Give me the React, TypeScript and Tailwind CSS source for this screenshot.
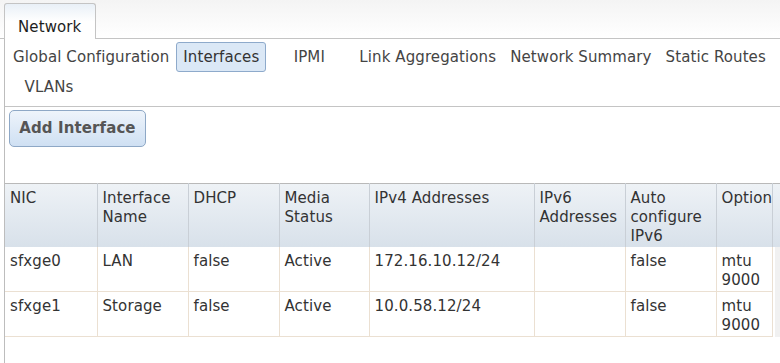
import React from 'react';

const subTabs = [
  { label: 'Global Configuration', active: false },
  { label: 'Interfaces', active: true },
  { label: 'IPMI', active: false },
  { label: 'Link Aggregations', active: false },
  { label: 'Network Summary', active: false },
  { label: 'Static Routes', active: false },
  { label: 'VLANs', active: false },
];

const columns = [
  { title: ['NIC'], width: 92 },
  { title: ['Interface', 'Name'], width: 91 },
  { title: ['DHCP'], width: 91 },
  { title: ['Media', 'Status'], width: 90 },
  { title: ['IPv4 Addresses'], width: 165 },
  { title: ['IPv6', 'Addresses'], width: 91 },
  { title: ['Auto', 'configure', 'IPv6'], width: 91 },
  { title: ['Option'], width: 56 },
];

const rows = [
  ['sfxge0', 'LAN', 'false', 'Active', '172.16.10.12/24', '', 'false', 'mtu 9000'],
  ['sfxge1', 'Storage', 'false', 'Active', '10.0.58.12/24', '', 'false', 'mtu 9000'],
];

const App = () => {
  return (
    <div className="w-[780px] h-[363px] overflow-hidden bg-white font-['DejaVu_Sans',sans-serif] text-[15px] tracking-[0.1px] text-[#3c3c3c]">
      {/* top tab strip */}
      <div className="flex pl-[4px] pt-[3px] bg-gradient-to-b from-[#f4f4f4] to-white border-b border-[#c4c4c4]">
        <div className="w-[92px] h-[36px] -mb-px border border-b-0 border-[#c4c4c4] rounded-t-[3px] bg-gradient-to-b from-[#e9f0f7] via-white to-white flex items-start pt-[12px] pl-[13px] text-[#1e1e1e]">
          Network
        </div>
      </div>

      <div className="ml-[4px] border-l border-[#bdbdbd] h-full">
        {/* sub navigation */}
        <div className="flex flex-wrap pl-[1px] pt-[3px] pb-[4px] border-b border-[#c4c4c4]">
          {subTabs.map(tab => (
            <div
              key={tab.label}
              className={`h-[30px] min-w-[86px] px-[6px] flex items-center justify-center whitespace-nowrap rounded-[3px] border ${
                tab.active
                  ? 'bg-[#dbe8f6] border-[#8eaacb] text-[#333]'
                  : 'border-transparent text-[#444]'
              }`}
            >
              {tab.label}
            </div>
          ))}
        </div>

        {/* toolbar */}
        <div className="pt-[3px] pl-[4px] h-[76px]">
          <button className="w-[137px] h-[37px] rounded-[5px] border border-[#8ea8c6] bg-gradient-to-b from-[#eef4fb] to-[#cfe0f3] font-bold text-[#555] text-[15px]">
            Add Interface
          </button>
        </div>

        {/* table */}
        <div className="flex">
          <table className="table-fixed border-collapse border-t border-[#b9b9b9] w-[767px]">
            <colgroup>
              {columns.map((c, i) => (
                <col key={i} style={{ width: c.width }} />
              ))}
            </colgroup>
            <thead>
              <tr className="h-[63px] bg-gradient-to-b from-[#eef2f6] to-[#d8e1ea]">
                {columns.map((c, i) => (
                  <th
                    key={i}
                    className="align-top text-left font-normal leading-[19px] pl-[5px] pt-[5px] border-r border-[#c9cfd6] text-[#333] whitespace-nowrap overflow-hidden"
                  >
                    {c.title.map(t => (
                      <div key={t}>{t}</div>
                    ))}
                  </th>
                ))}
              </tr>
            </thead>
            <tbody>
              {rows.map((r, ri) => (
                <tr key={ri} className="h-[45px]">
                  {r.map((cell, ci) => (
                    <td
                      key={ci}
                      className="align-top leading-[19px] pl-[5px] pt-[5px] border-r border-b border-[#ebe0d2] text-[#333] overflow-hidden"
                    >
                      {cell}
                    </td>
                  ))}
                </tr>
              ))}
            </tbody>
          </table>
          <div className="flex flex-col w-[8px]">
            <div className="h-[64px] bg-gradient-to-b from-[#eef2f6] to-[#d8e1ea] border-t border-[#b9b9b9]" />
            <div className="flex-1 ml-[2px] bg-[#f1f1f1] h-[120px]" />
          </div>
        </div>
      </div>
    </div>
  );
};

export default App;
